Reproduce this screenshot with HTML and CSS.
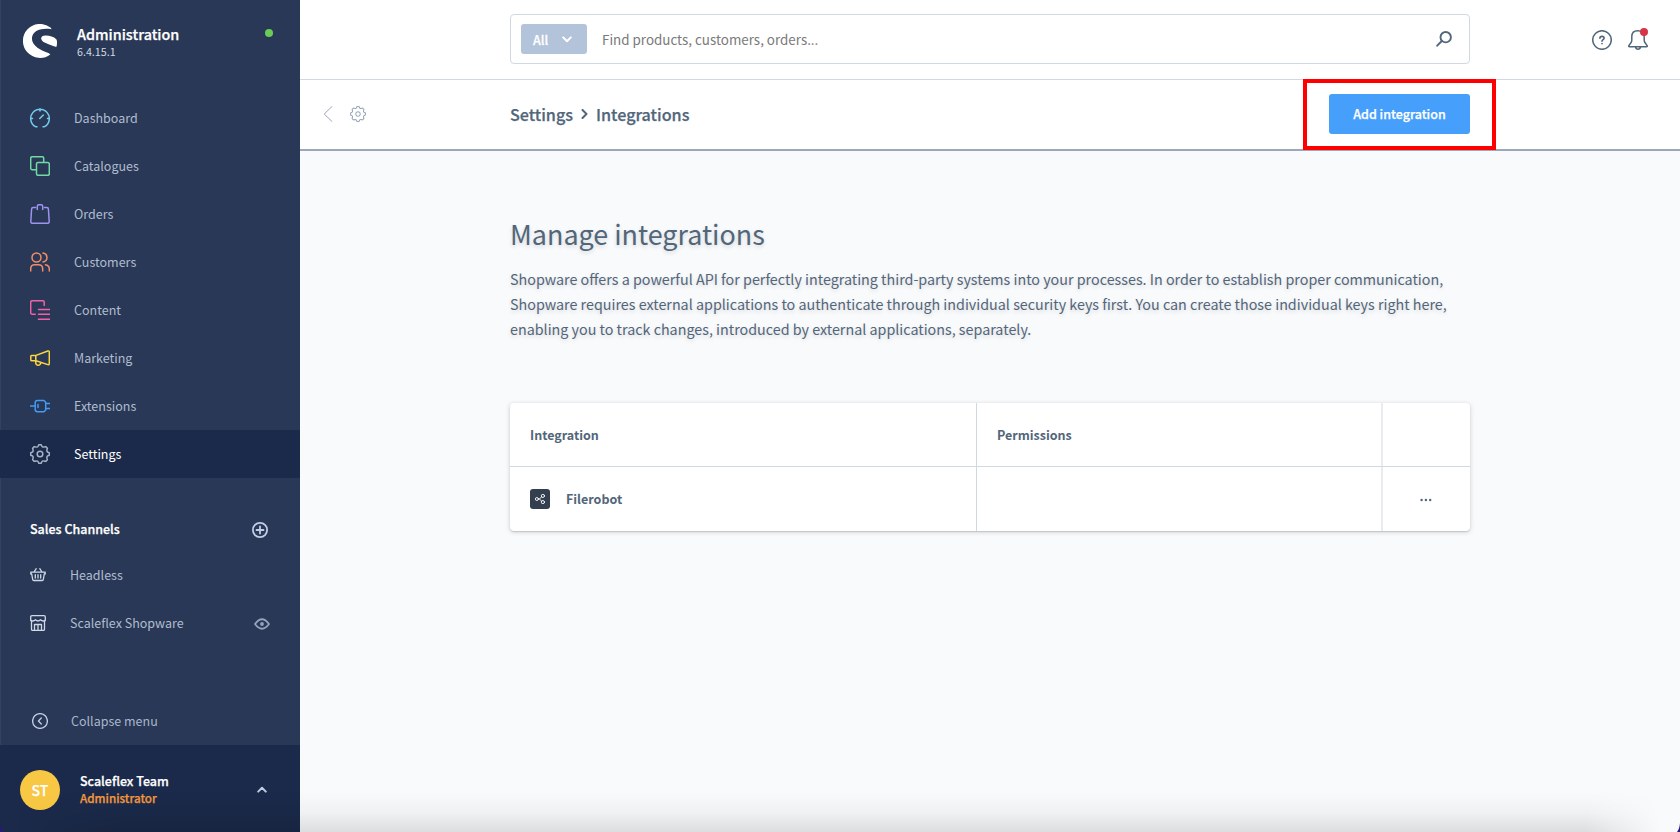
FILE: index.html
```html
<!DOCTYPE html>
<html lang="en">
<head>
<meta charset="utf-8">
<title>Integrations | Administration</title>
<link rel="stylesheet" href="styles.css">
</head>
<body>
<svg class="defs" width="0" height="0" aria-hidden="true">
  <symbol id="gear" viewBox="-10 -10 20 20">
    <path d="M-1.2-9.3H1.2Q2-7.3 2.4-7.1T4-6.9Q4.6-7 5.7-7.4L7.4-5.7Q7-4.6 6.9-4T7.1-2.4Q7.3-2 9.3-1.2V1.2Q7.3 2 7.1 2.4T6.9 4Q7 4.6 7.4 5.7L5.7 7.4Q4.6 7 4 6.9T2.4 7.1Q2 7.3 1.2 9.3H-1.2Q-2 7.3-2.4 7.1T-4 6.9Q-4.6 7-5.7 7.4L-7.4 5.7Q-7 4.6-6.9 4T-7.1 2.4Q-7.3 2-9.3 1.2V-1.2Q-7.3-2-7.1-2.4T-6.9-4Q-7-4.6-7.4-5.7L-5.7-7.4Q-4.6-7-4-6.9T-2.4-7.1Q-2-7.3-1.2-9.3Z"/>
    <circle r="2.8"/>
  </symbol>
</svg>
<div class="app">
  <aside class="sidebar">
    <header class="brand">
      <svg class="brand-logo" viewBox="0 0 34 34"><path d="M27.5 3.6A17 17 0 1 0 27.3 30.4C25 28.2 18.5 27 14.500 23.800C9.500 20 8 15.500 9.500 11.500C11.500 6.500 18.500 3.500 28.700 5.200Z"/><path d="M33.300 23C34.200 20.500 34.300 17.500 33.500 15.400C30.500 12.500 26.500 11.400 22.500 11.500C19.500 11.600 18 12.800 18.200 14.800C18.700 18.400 25 20 33.300 23Z"/></svg>
      <div class="brand-text"><div class="brand-name">Administration</div><div class="brand-version">6.4.15.1</div></div>
      <span class="status"></span>
    </header>
    <nav class="nav">
      <a class="nav-item"><svg class="icon c-cyan" viewBox="0 0 20 20"><path d="M7 18.700H5.500A9.300 9.300 0 1 1 14.500 18.700H13M10 .8V3M.8 10.500H2.500M17.500 10.500H19.200M9.800 10.500L13.300 7"/></svg><span>Dashboard</span></a>
      <a class="nav-item"><svg class="icon c-green" viewBox="0 0 20 20"><path d="M6.300 13.700H2.200A1.500 1.500 0 0 1 .7 12.200V2.200A1.500 1.500 0 0 1 2.200.7H12.200A1.500 1.500 0 0 1 13.700 2.200V6.300"/><rect x="6.500" y="6.500" width="12.800" height="12.800" rx="1.500"/></svg><span>Catalogues</span></a>
      <a class="nav-item"><svg class="icon c-purple" viewBox="0 0 20 20"><path d="M5.500 3.500H3.200A1.600 1.600 0 0 0 1.600 5L.8 17.500A1.600 1.600 0 0 0 2.400 19.300H17.600A1.600 1.600 0 0 0 19.200 17.500L18.400 5A1.600 1.600 0 0 0 16.800 3.500H14.500M7.300 5.500V2.500Q7.300.7 9 .7H11Q12.700.7 12.700 2.500V5.500"/></svg><span>Orders</span></a>
      <a class="nav-item"><svg class="icon c-orange" viewBox="0 0 20 20"><circle cx="6.500" cy="5.500" r="4.500"/><path d="M.7 19V17Q.7 12.800 4.700 12.800H8.500Q12.700 12.800 12.700 17V19M13 1.100C18.300 2 18.300 9 13 9.900M15.500 12.800Q19.300 13.500 19.300 17V19"/></svg><span>Customers</span></a>
      <a class="nav-item"><svg class="icon c-pink" viewBox="0 0 20 20"><path d="M5.200 14.200H2.200A1.500 1.500 0 0 1 .7 12.700V2.200A1.500 1.500 0 0 1 2.200.7H12.700A1.500 1.500 0 0 1 14.200 2.200V5.500M8.500 9.400H20M8.500 14.300H20M8.500 19.300H20"/></svg><span>Content</span></a>
      <a class="nav-item"><svg class="icon c-yellow" viewBox="0 0 20 20"><path d="M1.500 7.400H6L17.800 3Q19.300 2.500 19.300 4V15.500Q19.300 17 17.800 16.600L6 12.800H1.500Q.8 12.800.8 12V8.200Q.8 7.400 1.500 7.400ZM5.800 7.500V12.800M5.800 13C5 18.500 10.500 18.500 10.700 14.600"/></svg><span>Marketing</span></a>
      <a class="nav-item"><svg class="icon c-blue" viewBox="0 0 20 20"><path d="M0 10H5M7.500 4.500H14L15.700 6.200V14L14 15.700H7.500Q5.200 15.700 5.200 13.500V6.700Q5.200 4.500 7.500 4.500ZM8 8.500V11.500M16 7.400H20M16 12.600H20"/></svg><span>Extensions</span></a>
      <a class="nav-item active"><svg class="icon"><use href="#gear"/></svg><span>Settings</span></a>
    </nav>
    <section class="channels">
      <div class="channels-head"><span>Sales Channels</span><svg class="icon16 bold" viewBox="0 0 16 16"><circle cx="8" cy="8" r="7.100"/><path d="M8 4.500V11.500M4.500 8H11.500"/></svg></div>
      <a class="channel"><svg class="icon16 pale" viewBox="0 0 16 16"><path d="M.8 5.200H15.200V7H14.300L13.300 12.500Q13.200 13.500 12.200 13.500H3.800Q2.800 13.500 2.700 12.500L1.700 7H.8ZM4 5L6.200 1.700M12 5L9.800 1.700M5.300 7.700V11M8 7.700V11M10.700 7.700V11"/></svg><span>Headless</span></a>
      <a class="channel"><svg class="icon16 pale" viewBox="0 0 16 16"><path d="M.7 5.500V2Q.7.700 2 .7H14Q15.300.7 15.300 2V5.500M.7 5Q3 7.200 5.500 4.800Q8 7.200 10.500 4.800Q13 7.200 15.300 5M1.500 6.500V14.500Q1.500 15.300 2.300 15.300H13.700Q14.500 15.300 14.500 14.500V6.500M4.500 15V9.500H11.500V15M8 10V15"/></svg><span>Scaleflex Shopware</span><svg class="icon16 eye" viewBox="0 0 16 16"><path d="M1 8Q8-1.500 15 8Q8 17.500 1 8Z"/><circle cx="8" cy="8" r="1"/></svg></a>
    </section>
    <a class="collapse"><svg class="icon16" viewBox="0 0 16 16"><circle cx="8" cy="8" r="7.400"/><path d="M9.300 5L6.400 8L9.300 11"/></svg><span>Collapse menu</span></a>
    <footer class="user">
      <div class="avatar">ST</div>
      <div class="user-text"><div class="user-name">Scaleflex Team</div><div class="user-role">Administrator</div></div>
      <svg class="chev" viewBox="0 0 10 7"><path d="M1.200 5.600L5 1.800L8.800 5.600"/></svg>
    </footer>
  </aside>
  <main class="main">
    <div class="topbar">
      <div class="search">
        <div class="chip"><span>All</span><svg class="chev" viewBox="0 0 10 7"><path d="M1.200 1.400L5 5.200L8.800 1.400"/></svg></div>
        <span class="placeholder">Find products, customers, orders...</span>
        <svg class="lens" viewBox="0 0 16 16"><circle cx="9.700" cy="6.200" r="5.200"/><path d="M5.800 10L1.200 14.700"/></svg>
      </div>
      <div class="top-actions">
        <svg class="icon" viewBox="0 0 20 20"><circle cx="10" cy="10" r="9.300"/><path class="mark" d="M7.900 8.200C7.900 5.700 12.100 5.700 12.100 8.200C12.100 9.700 10 9.600 10 11.300M10 13.600V13.700"/></svg>
        <div class="bell"><svg class="icon" viewBox="0 0 20 20"><path d="M1.500 16.700Q.3 16.700.9 15.600L3.400 12Q3.800 11.200 3.800 9.500V6.500Q4 .8 9.500.8Q16.200.8 16.200 7V9.500Q16.200 11.200 16.600 12L19.100 15.600Q19.700 16.700 18.500 16.700ZM7.500 17Q8 19.200 10 19.200T12.500 17"/></svg><span class="bell-dot"></span></div>
      </div>
    </div>
    <div class="pagehead">
      <div class="back"><svg class="back-arrow" viewBox="0 0 10 16"><path d="M9 .5L1.200 8L9 15.500"/></svg><svg class="back-gear"><use href="#gear"/></svg></div>
      <div class="crumbs"><span>Settings</span><svg class="crumb-sep" viewBox="0 0 7 10"><path d="M1.500 1L5.500 5L1.500 9"/></svg><span>Integrations</span></div>
      <div class="highlight"><button class="primary"><span>Add integration</span></button></div>
    </div>
    <div class="content">
      <h1>Manage integrations</h1>
      <div class="intro">
        <div>Shopware offers a powerful API for perfectly integrating third-party systems into your processes. In order to establish proper communication,</div>
        <div>Shopware requires external applications to authenticate through individual security keys first. You can create those individual keys right here,</div>
        <div>enabling you to track changes, introduced by external applications, separately.</div>
      </div>
      <div class="card">
        <div class="row head"><div class="cell"><span>Integration</span></div><div class="cell"><span>Permissions</span></div><div class="cell last"></div></div>
        <div class="row"><div class="cell"><span class="share"><svg viewBox="0 0 10 10"><circle cx="1.900" cy="5" r="1.500"/><circle cx="7.900" cy="1.900" r="1.600"/><circle cx="7.900" cy="8.100" r="1.600"/><path d="M3.400 5H4.500L6.500 2.900M4.500 5L6.500 7.100"/></svg></span><span class="name">Filerobot</span></div><div class="cell"></div><div class="cell last"><svg class="dots" viewBox="0 0 12 4"><circle cx="1.600" cy="2" r="1.200"/><circle cx="5.900" cy="2" r="1.200"/><circle cx="10.200" cy="2" r="1.200"/></svg></div></div>
      </div>
    </div>
  </main>
</div>
<div class="bottom-shade"></div>
<svg class="corner corner-left" viewBox="0 0 3 9"><path d="M0 0Q.5 6 3 9H0Z"/></svg>
<svg class="corner corner-right" viewBox="0 0 3 9"><path d="M3 0Q2.500 6 0 9H3Z"/></svg>
</body>
</html>
```
FILE: styles.css
```css
* { box-sizing: border-box; }
body {
  margin: 0;
  width: 1680px;
  height: 832px;
  overflow: hidden;
  font-family: "Noto Sans CJK SC", "Noto Sans", sans-serif;
  font-size: 12.5px;
  color: #52667a;
  background: #f9fafc;
}
svg { display: block; flex: none; fill: none; stroke: currentColor; stroke-linecap: round; stroke-linejoin: round; }
.defs { position: absolute; }
.app { display: flex; height: 832px; }

.sidebar {
  display: flex;
  flex-direction: column;
  width: 300px;
  background: #293856;
  color: #b0bccf;
  border-left: 1px solid #334261;
}
.brand { display: flex; height: 94px; padding: 24px 27px 0 22px; }
.brand-logo { width: 34px; height: 34px; fill: #fff; stroke: none; }
.brand-text { flex: 1; margin-left: 20px; }
.brand-name { margin-bottom: 1px; font-size: 14.4px; line-height: 20px; font-weight: 500; color: #fff; }
.brand-version { font-size: 10.7px; line-height: 14px; color: #d1d9e0; }
.status { width: 8px; height: 8px; margin-top: 5px; border-radius: 50%; background: #68cc56; }
.brand-name, .channels-head span, .user-text, .avatar, .chip span, .crumbs span, .primary { -webkit-text-stroke: .25px currentColor; }

.nav-item { display: flex; align-items: center; height: 48px; padding-left: 29px; gap: 24px; }
.nav-item span, .channels-head span, .channel span, .collapse span, .crumbs span, .primary span, .name { padding-bottom: 2px; }
.nav-item.active { margin-left: -1px; padding-left: 30px; background: #1b2a4a; color: #fff; }
.icon { width: 20px; height: 20px; stroke-width: 1.5; }
.active .icon { color: #a5b3c4; }
.c-cyan { color: #75cbeb; }
.c-green { color: #72d9a4; }
.c-purple { color: #a092f0; }
.c-orange { color: #f08c68; }
.c-pink { color: #f062a6; }
.c-yellow { color: #ffd53d; }
.c-blue { color: #439bf5; }

.channels { padding: 27px 26px 0 29px; }
.channels-head { display: flex; align-items: center; justify-content: space-between; height: 48px; padding-right: 6px; color: #fff; font-weight: 500; }
.channels-head .icon16 { margin-top: 1px; }
.channel { display: flex; align-items: center; height: 48px; gap: 24px; }
.channels-head + .channel { margin-top: -2px; }
.icon16 { width: 16px; height: 16px; stroke-width: 1.3; }
.bold { stroke-width: 1.8; color: #c2cee6; }
.pale { stroke-width: 1.3; color: #d1d9e8; }
.eye { margin: 2px 4px 0 auto; stroke-width: 1.6; color: #95a4ba; }
.channels .eye { stroke-width: 1.8; }
.collapse { display: flex; align-items: center; height: 48px; margin-top: auto; padding-left: 31px; gap: 23px; color: #a9b6ca; }
.collapse .icon16 { color: #c2cee6; }
.user { display: flex; align-items: center; height: 87px; margin-left: -1px; padding: 3px 33px 0 20px; background: #1b2a4a; }
.avatar { width: 40px; height: 40px; border-radius: 50%; background: #f8c744; color: #fff; font-size: 14px; font-weight: 500; line-height: 40px; text-align: center; }
.user-text { flex: 1; margin-left: 20px; padding-bottom: 2px; font-weight: 500; }
.user-name { line-height: 17px; color: #fff; }
.user-role { line-height: 17px; font-size: 11.65px; color: #f3993e; }
.chev { width: 10px; height: 7px; stroke-width: 2; }
.user .chev { margin-bottom: 1px; color: #bfcbe0; }

.main { flex: 1; }
.topbar { display: flex; height: 80px; padding: 14px 32px 0 210px; background: #fff; border-bottom: 1px solid #d1d9e0; }
.search { display: flex; align-items: center; width: 960px; height: 50px; padding: 0 17px 0 10px; border: 1px solid #d1d9e0; border-radius: 4px; }
.chip { display: flex; align-items: center; justify-content: space-between; width: 66px; height: 30px; margin-right: 15px; padding: 0 15px 0 12px; border-radius: 3px; background: #b3c3da; color: #fff; font-weight: 500; }
.placeholder { flex: 1; font-size: 13.4px; color: #7a7a7a; }
.lens { width: 16px; height: 16px; stroke-width: 1.9; }
.top-actions { display: flex; gap: 16px; margin: 16px 0 0 auto; }
.mark { stroke-width: 1.6; }
.bell { position: relative; }
.bell-dot { position: absolute; right: 0; top: -2px; width: 8px; height: 8px; border-radius: 50%; background: #d63547; }

.pagehead { display: flex; align-items: center; position: relative; height: 71px; padding-left: 23px; background: #fff; border-bottom: 2px solid #9aa8b8; }
.back { display: flex; align-items: center; gap: 17px; width: 187px; padding-bottom: 1px; color: #98a6b7; }
.back-arrow { width: 10px; height: 16px; stroke-width: 1; }
.back-gear { width: 16px; height: 16px; stroke-width: 1.3; }
.crumbs { display: flex; align-items: center; gap: 8px; font-size: 16.15px; font-weight: 500; }
.crumb-sep { width: 7px; height: 10px; margin-bottom: 1px; stroke-width: 2; }
.highlight { position: absolute; left: 1003px; top: -1px; width: 193px; height: 71px; padding: 11px 22px 0; border: 4px solid #f00; }
.primary { display: flex; align-items: center; justify-content: center; width: 141px; height: 40px; padding: 0; border: 0; border-radius: 3px; background: #469ffa; color: #fff; font-family: inherit; font-size: 12.5px; font-weight: 500; }
.primary span { padding-bottom: 1px; }

.content { width: 960px; margin-left: 210px; padding-top: 61px; }
h1 { margin: 0 0 10px; font-size: 26.9px; line-height: 44px; font-weight: 400; text-shadow: 0 2px 4px rgba(0,0,0,.15); }
.intro { font-size: 14.32px; line-height: 25px; white-space: nowrap; text-shadow: 0 2px 4px rgba(0,0,0,.15); }
.card { margin-top: 62px; background: #fff; border-radius: 4px; box-shadow: 0 1px 1px rgba(0,0,0,.12), 0 1px 5px rgba(0,0,0,.18); }
.row { display: grid; grid-template-columns: 467px 406px 87px; height: 64px; font-weight: 700; }
.head { border-bottom: 1px solid #d1d9e0; }
.cell { display: flex; align-items: center; padding: 0 20px; border-right: 1px solid #d1d9e0; }
.cell:nth-child(2) { border-right: 2px solid #e8ecf0; }
.cell.last { justify-content: center; padding: 2px 2px 0 0; border: 0; }
.share { display: flex; align-items: center; justify-content: center; width: 20px; height: 20px; margin-right: 16px; border-radius: 3px; background: #333e4e; color: #fff; }
.share svg { width: 10px; height: 10px; stroke-width: .9; }
.dots { width: 12px; height: 4px; fill: currentColor; stroke: none; }

.bottom-shade { position: absolute; left: 0; top: 792px; width: 1680px; height: 40px; background: linear-gradient(rgba(0,0,0,0), rgba(0,0,0,.035) 50%, rgba(0,0,0,.11)); mask-image: linear-gradient(90deg, transparent 15px, #000 120px, #000 1585px, transparent 1660px); }
.corner { position: absolute; top: 823px; width: 3px; height: 9px; fill: #2c1580; stroke: none; }
.corner-left { left: 0; }
.corner-right { left: 1677px; }
```
